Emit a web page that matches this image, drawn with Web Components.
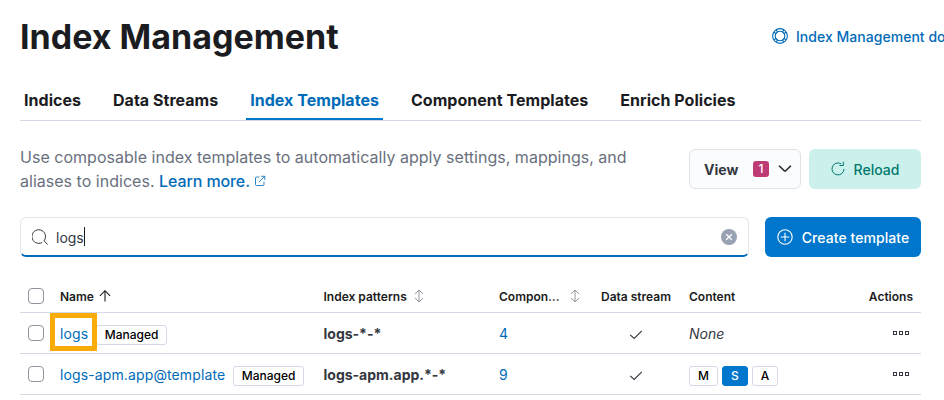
<!DOCTYPE html>
<html lang="en">
<head>
<meta charset="utf-8">
<title>Index Management</title>
<style>
html,body{margin:0;height:400px;overflow:hidden;background:#fff}
body{font-family:Inter,"Liberation Sans",sans-serif;color:#343741;font-size:14px}
</style>
</head>
<body>
<index-management></index-management>
<script>
const define = (name, css, html) => customElements.define(name, class extends HTMLElement {
  constructor() {
    super();
    this.attachShadow({mode: 'open'}).innerHTML = `<style>*,::after{box-sizing:border-box}${css}</style>${html(this)}`;
  }
});

const icons = {
  help: '<circle cx="8" cy="8" r="7.4"/><circle cx="8" cy="8" r="4.8"/><path d="M1.8 4.2l2.6 1.5M4.2 1.8l1.5 2.6M14.2 4.2l-2.6 1.5M11.8 1.8l-1.5 2.6M1.8 11.8l2.6-1.5M4.2 14.2l1.5-2.6M14.2 11.8l-2.6-1.5M11.8 14.2l-1.5-2.6"/>',
  popout: '<path d="M7.2 2.7H3.3a1.3 1.3 0 0 0-1.3 1.3v8.7A1.3 1.3 0 0 0 3.3 14h8.7a1.3 1.3 0 0 0 1.3-1.3V8.8M9.5 1.7h4.9v4.9M14.2 1.9L6.6 9.5"/>',
  search: '<path stroke-width="1" d="M12.2 11.4v.6l3.5 3.6M10.2 13.4A6.8 6.8 0 1 1 12.2 11.6"/>',
  refresh: '<path stroke-width="1" d="M11 2.7A6 6 0 1 0 14 8M13.3 .8V4.5H9.5"/>',
  plus: '<circle cx="8" cy="8" r="7.2"/><path d="M8 3.8v8.4M3.8 8h8.4"/>',
  down: '<path stroke-width="1.6" stroke-linecap="round" d="M2.5 5.2l4.9 4.6q.6.5 1.2 0l4.9-4.6"/>',
  up: '<path d="M8 13.5V2.7M2.9 7.8L8 2.7l5.1 5.1"/>',
  sort: '<path d="M8 1.5v13M3.3 5.6L8 1.3l4.7 4.3M3.3 10.4L8 14.7l4.7-4.3"/>',
  check: '<path stroke-width="1.1" d="M2.2 9.8l4 3.7L13.8 5.9"/>',
  dots: '<path shape-rendering="crispEdges" stroke-width="1" d="M.5 6.5h3v3h-3zM6.5 6.5h3v3h-3zM12.5 6.5h3v3h-3z"/>',
  clear: '<circle cx="8" cy="8" r="8" fill="#98a2b3" stroke="none"/><path stroke="#fff" stroke-width="1.3" d="M5.2 5.2l5.6 5.6M10.8 5.2l-5.6 5.6"/>'
};
define('ui-icon', ':host{display:inline-flex;flex:none;width:16px;height:16px}svg{width:100%;height:100%;fill:none;stroke:currentColor;stroke-width:1.1}',
  el => `<svg viewBox="0 0 16 16">${icons[el.getAttribute('name')]}</svg>`);

define('ui-tab', `:host{display:block;height:40px;padding:0 4px;font-size:16px;font-weight:700;line-height:40px;letter-spacing:.03px;color:#1a1c21;white-space:nowrap}
  :host([selected]){color:#006bb8;box-shadow:inset 0 -2px #0077cc}`, () => '<slot></slot>');

define('ui-button', `:host{box-sizing:border-box;display:flex;align-items:center;justify-content:center;height:40px;border-radius:6px;font-size:14px;font-weight:500;white-space:nowrap}
  :host([kind=view]){width:112px;background:#fbfcfe;border:1px solid #dfe3e8;font-weight:700;justify-content:flex-start;padding:0 7px 0 14px}
  :host([kind=reload]){width:112px;background:#ccf1ec;color:#00786d;gap:8px;padding-right:1px}
  :host([kind=create]){width:156px;background:#0077cc;color:#fff;gap:9px;letter-spacing:.06px}`, () => '<slot></slot>');

define('ui-count', `:host{display:block;flex:none;width:16px;height:16px;margin:0 8px 0 auto;border-radius:3px;background:#bd3c76;color:#fff;font-size:12px;line-height:16px;text-align:center;font-weight:500}`, () => '<slot></slot>');

define('ui-badge', `:host{box-sizing:border-box;display:inline-block;height:20px;padding:0 8px;border:1px solid #d3dae6;border-radius:3px;background:#fff;color:#000;font-size:12px;font-weight:500;line-height:18px;white-space:nowrap}
  :host([on]){background:#0077cc;border-color:#0077cc;color:#fff}`, () => '<slot></slot>');

define('ui-checkbox', ':host{box-sizing:border-box;display:block;width:16px;height:16px;border:1px solid #8f949e;border-radius:4px;background:#fff}', () => '');

define('ui-search', `:host{box-sizing:border-box;display:flex;align-items:center;flex:1;height:40px;padding:0 11px;border:1px solid #e3e6eb;border-bottom:2px solid #006bb8;border-radius:6px;background:#fff;font-size:14px}
  .value{margin-left:8px;padding-top:2px;line-height:17px;border-right:1px solid #1a1c21}
  .clear{margin-left:auto}`,
  () => '<ui-icon name="search"></ui-icon><span class="value"><slot></slot></span><ui-icon class="clear" name="clear"></ui-icon>');

define('template-row', `:host{box-sizing:border-box;display:grid;grid-template-columns:32px 263.5px 175.5px 102px 86px 1fr 80px;align-items:center;height:41px;border-bottom:1px solid #d3dae6;font-size:14px}
  :host([header]){height:32px;font-size:12px;font-weight:600;color:#1a1c21}
  div{display:flex;align-items:center;padding:0 8px;white-space:nowrap}
  .actions{justify-content:flex-end;padding-right:12px}
  .check{justify-content:center}
  .content{padding-left:10px}
  :host([header]) .actions{padding-right:8px}
  :host([header]) ui-checkbox{margin-top:-1px}`,
  () => `<div><ui-checkbox></ui-checkbox></div><div><slot name="name"></slot></div><div><slot name="patterns"></slot></div><div><slot name="components"></slot></div><div class="check"><slot name="stream"></slot></div><div class="content"><slot name="content"></slot></div><div class="actions"><slot name="actions"></slot></div>`);

define('index-management', `
  :host{display:block;height:400px;overflow:hidden}
  main{width:901px;margin-left:20px}
  header{display:flex;justify-content:space-between;height:80px;padding-top:16px}
  h1{margin:0;font-size:34px;line-height:42px;font-weight:700;letter-spacing:.02px;color:#1a1c21}
  .docs{display:flex;align-items:center;gap:8px;height:40px;width:149px;color:#006bb8;font-size:14px;font-weight:500;letter-spacing:.03px;white-space:nowrap}
  nav{display:flex;gap:24px;height:41px;border-bottom:1px solid #d3dae6}
  .intro{display:flex;align-items:center;gap:8px;margin-top:24px;height:48px}
  p{flex:1;margin:0;color:#69707d;font-size:16px;line-height:24px;letter-spacing:.02px;white-space:nowrap}
  .link{color:#006bb8;letter-spacing:.12px}
  p .link{font-weight:500;letter-spacing:-.1px}
  p ui-icon{width:12px;height:12px;margin-left:4px}
  .tools{display:flex;gap:16px;margin:24px 0}
  .name{display:flex;align-items:center;gap:7.5px}
  .name ui-badge,.tags ui-badge{margin:3px 0 0}
  .th{display:flex;align-items:center;gap:5px}
  .th ui-icon{width:14px;height:14px}
  .th ui-icon[name=sort]{color:#8d9197;margin-top:-1px}
  .th ui-icon[name=up]{width:16px;height:16px;margin:-1px 0 0 -2px}
  .tags{display:flex;gap:4px}
  .strong{font-weight:700}
  .mark{position:relative}
  .mark::after{content:"";position:absolute;left:-10px;top:-12px;width:47px;height:38px;border:5px solid #f9ab0a;z-index:1}
  `, () => `<main>
  <header><h1>Index Management</h1><span class="docs"><ui-icon name="help"></ui-icon><span>Index Management do</span></span></header>
  <nav><ui-tab>Indices</ui-tab><ui-tab>Data Streams</ui-tab><ui-tab selected>Index Templates</ui-tab><ui-tab>Component Templates</ui-tab><ui-tab>Enrich Policies</ui-tab></nav>
  <section class="intro"><p>Use composable index templates to automatically apply settings, mappings, and<br>aliases to indices. <span class="link">Learn more.<ui-icon name="popout"></ui-icon></span></p>
  <ui-button kind="view"><span>View</span><ui-count>1</ui-count><ui-icon name="down"></ui-icon></ui-button>
  <ui-button kind="reload"><ui-icon name="refresh"></ui-icon><span>Reload</span></ui-button></section>
  <section class="tools"><ui-search>logs</ui-search><ui-button kind="create"><ui-icon name="plus"></ui-icon><span>Create template</span></ui-button></section>
  <section>
  <template-row header>
    <span slot="name" class="th"><span>Name</span><ui-icon name="up"></ui-icon></span>
    <span slot="patterns" class="th"><span>Index patterns</span><ui-icon name="sort"></ui-icon></span>
    <span slot="components" class="th" style="gap:8px"><span>Compon…</span><ui-icon name="sort"></ui-icon></span>
    <span slot="stream">Data stream</span><span slot="content">Content</span><span slot="actions">Actions</span>
  </template-row>
  <template-row>
    <span slot="name" class="name"><span class="link mark">logs</span><ui-badge>Managed</ui-badge></span>
    <span slot="patterns" class="strong">logs-*-*</span><span slot="components" class="link">4</span>
    <ui-icon slot="stream" name="check"></ui-icon><i slot="content">None</i><ui-icon slot="actions" name="dots"></ui-icon>
  </template-row>
  <template-row>
    <span slot="name" class="name"><span class="link">logs-apm.app@template</span><ui-badge>Managed</ui-badge></span>
    <span slot="patterns" class="strong">logs-apm.app.*-*</span><span slot="components" class="link">9</span>
    <ui-icon slot="stream" name="check"></ui-icon>
    <span slot="content" class="tags"><ui-badge>M</ui-badge><ui-badge on>S</ui-badge><ui-badge>A</ui-badge></span>
    <ui-icon slot="actions" name="dots"></ui-icon>
  </template-row>
  </section></main>`);
</script>
</body>
</html>
